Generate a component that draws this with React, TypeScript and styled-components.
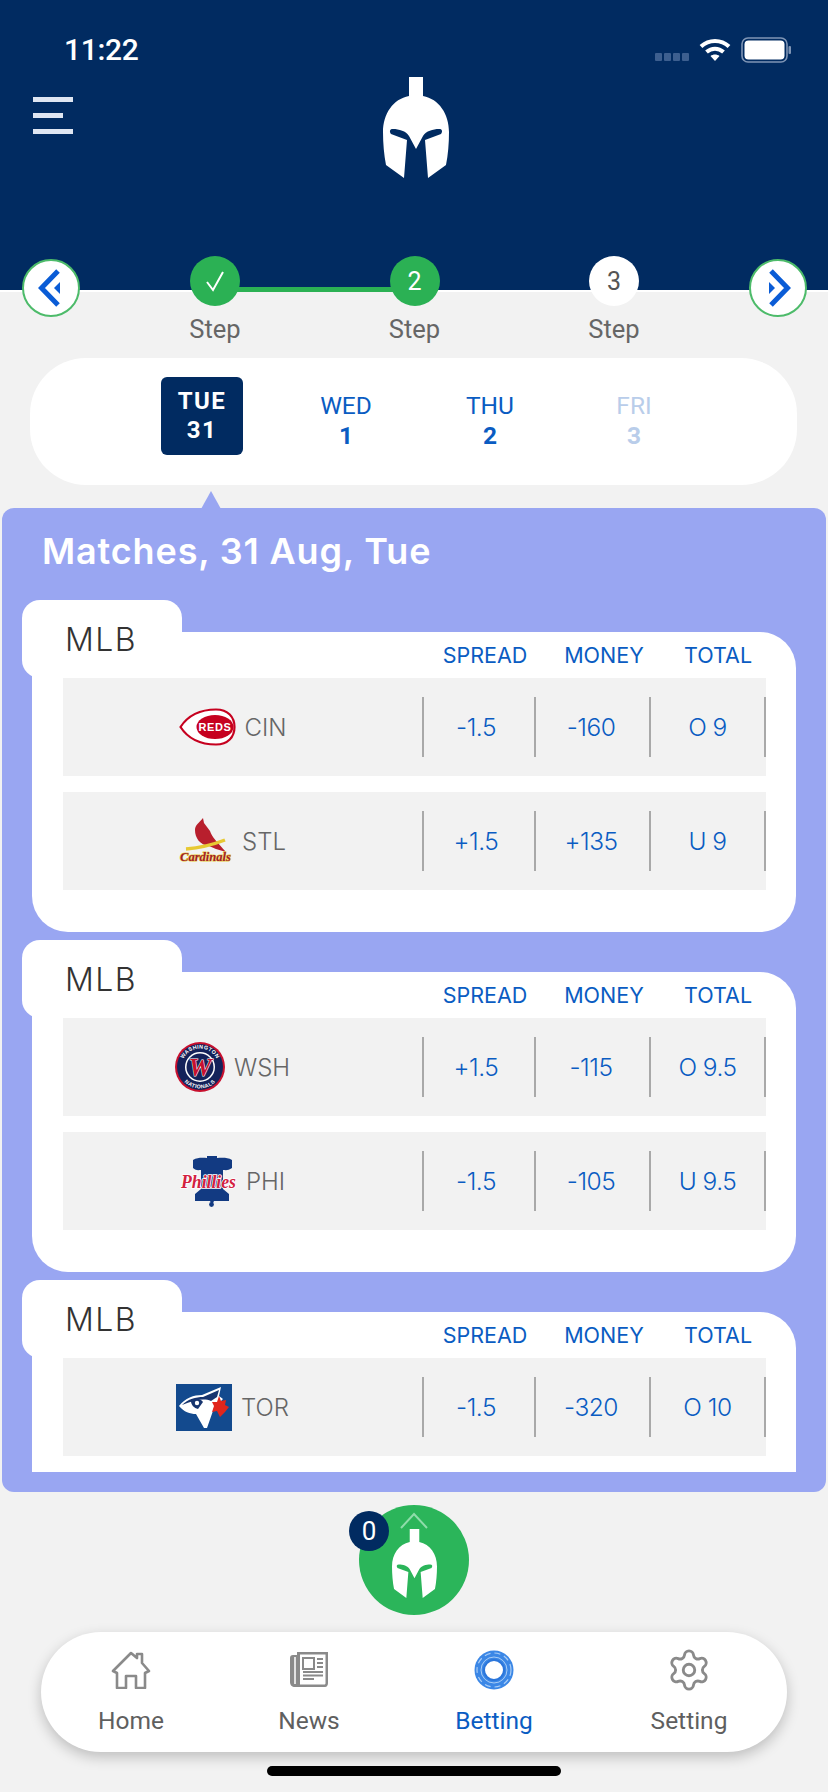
import React from "react";
import styled, { createGlobalStyle } from "styled-components";
import { Settings } from "lucide-react";

const GlobalStyle = createGlobalStyle`
  html, body {
    margin: 0;
    padding: 0;
    background: #f2f2f2;
  }
  * {
    box-sizing: border-box;
  }
`;

const Page = styled.div`
  width: 828px;
  height: 1792px;
  overflow: hidden;
  background: #f2f2f2;
  display: flex;
  flex-direction: column;
  font-family: Roboto, "Liberation Sans", sans-serif;
`;

const Header = styled.header`
  height: 290px;
  flex-shrink: 0;
  background: #012b61;
  box-shadow: 0 2px 0 #fff;
  color: #fff;
  display: flex;
  flex-direction: column;
`;

const StatusBar = styled.div`
  height: 76px;
  padding: 32px 37px 0 64px;
  display: flex;
  justify-content: space-between;
  align-items: flex-start;
`;

const Clock = styled.span`
  font-size: 30px;
  font-weight: 500;
  line-height: 36px;
  letter-spacing: -0.3px;
`;

const StatusIcons = styled.div`
  display: flex;
  align-items: center;
  gap: 10px;
  height: 36px;
`;

const SignalDots = styled.div`
  display: flex;
  gap: 2px;
  margin-top: 14px;
  span {
    width: 7px;
    height: 8px;
    border-radius: 1px;
    background: #3d5f8f;
  }
`;

const BrandRow = styled.div`
  position: relative;
  display: flex;
  justify-content: center;
  padding: 1px 0 0 3px;
`;

const Burger = styled.div`
  position: absolute;
  left: 33px;
  top: 21px;
  display: flex;
  flex-direction: column;
  gap: 11px;
`;

const BurgerLine = styled.span<{ $w: number }>`
  display: block;
  width: ${(p) => p.$w}px;
  height: 5px;
  background: #dfe6f2;
`;

const StepRow = styled.div`
  margin-top: -34px;
  padding: 0 21px 0 22px;
  height: 102px;
  flex-shrink: 0;
  display: grid;
  grid-template-columns: 58px 1fr 58px;
  position: relative;
`;

const ArrowButton = styled.div`
  width: 58px;
  height: 58px;
  margin-top: 3px;
  border-radius: 50%;
  background: #fff;
  border: 2px solid #4dbb6a;
  display: flex;
  align-items: center;
  justify-content: center;
`;

const Steps = styled.div`
  display: flex;
  justify-content: center;
`;

const Step = styled.div`
  width: 199.5px;
  display: flex;
  flex-direction: column;
  align-items: center;
  position: relative;
`;

const StepLine = styled.span`
  position: absolute;
  top: 31px;
  left: 50%;
  width: 199.5px;
  height: 5px;
  background: #2bb154;
`;

const StepDot = styled.div<{ $on: boolean }>`
  position: relative;
  width: 50px;
  height: 50px;
  border-radius: 50%;
  background: ${(p) => (p.$on ? "#2bb154" : "#fff")};
  color: ${(p) => (p.$on ? "#fff" : "#555")};
  font-size: 25px;
  display: flex;
  align-items: center;
  justify-content: center;
`;

const StepLabel = styled.span`
  margin-top: 8px;
  font-size: 25.5px;
  line-height: 30px;
  color: #666;
`;

const DatePill = styled.div`
  margin: 0 31px 0 30px;
  height: 127px;
  flex-shrink: 0;
  border-radius: 56px;
  background: #fff;
  padding: 19px 0 0 100px;
  display: grid;
  grid-template-columns: repeat(4, 144px);
  align-items: start;
`;

const DayCol = styled.div<{ $dim?: boolean }>`
  height: 78px;
  display: flex;
  flex-direction: column;
  align-items: center;
  justify-content: center;
  color: ${(p) => (p.$dim ? "#b9cdea" : "#0a5cc2")};
  font-size: 24.5px;
  line-height: 30px;
  padding-top: 10px;
  b {
    font-weight: 700;
  }
`;

const DayActive = styled.div`
  width: 82px;
  height: 78px;
  justify-self: center;
  border-radius: 6px;
  background: #012b61;
  color: #fff;
  font-size: 24px;
  font-weight: 700;
  line-height: 29px;
  letter-spacing: 1.4px;
  display: flex;
  flex-direction: column;
  align-items: center;
  justify-content: center;
`;

const Panel = styled.section`
  position: relative;
  margin: 23px 2px 0;
  height: 984px;
  flex-shrink: 0;
  background: #99a6f2;
  border-radius: 12px;
  display: flex;
  flex-direction: column;
  padding-bottom: 20px;

  &::before {
    content: "";
    position: absolute;
    left: 199px;
    top: -17px;
    border-left: 10px solid transparent;
    border-right: 10px solid transparent;
    border-bottom: 18px solid #99a6f2;
  }
`;

const PanelTitle = styled.h2`
  margin: 0;
  padding: 19px 0 0 40px;
  height: 92px;
  flex-shrink: 0;
  font-family: Inter, "Open Sans", sans-serif;
  font-size: 36px;
  font-weight: 600;
  letter-spacing: 0.85px;
  line-height: 48px;
  color: #fff;
`;

const MatchList = styled.div`
  flex: 1;
  min-height: 0;
  overflow: hidden;
  padding: 32px 0 0 30px;
  display: flex;
  flex-direction: column;
  gap: 40px;
`;

const LeagueCard = styled.article`
  position: relative;
  width: 764px;
  height: 300px;
  flex-shrink: 0;
  background: #fff;
  border-radius: 36px;
  padding: 0 30px 0 31px;
`;

const LeagueTab = styled.div`
  position: absolute;
  left: -10px;
  top: -32px;
  width: 160px;
  height: 78px;
  background: #fff;
  border-radius: 18px;
  padding: 20px 0 0 43px;
  font-family: Inter, "Open Sans", sans-serif;
  font-size: 32px;
  font-weight: 300;
  letter-spacing: 1.4px;
  line-height: 40px;
  color: #333;
`;

const MarketHead = styled.div`
  height: 46px;
  margin-right: -3px;
  display: grid;
  grid-template-columns: 366px 112px 126px 102px;
  align-items: center;
  font-family: Inter, "Open Sans", sans-serif;
  font-size: 21.5px;
  color: #0a5cc2;
  text-align: center;
  white-space: nowrap;
`;

const Rows = styled.div`
  display: flex;
  flex-direction: column;
  gap: 16px;
`;

const Row = styled.div`
  height: 98px;
  background: #f2f2f2;
  display: grid;
  grid-template-columns: 361px 112px 115px 115px;
  align-items: center;
`;

const TeamCell = styled.div`
  height: 60px;
  border-right: 2px solid #a9a9a9;
  padding-right: 20px;
  display: flex;
  align-items: center;
  justify-content: center;
  gap: 9px;
  font-family: Inter, "Open Sans", sans-serif;
  font-size: 24px;
  font-weight: 300;
  color: #666;
`;

const OddCell = styled.div<{ $nudge?: number }>`
  height: 60px;
  border-right: 2px solid #a9a9a9;
  padding-right: ${(p) => p.$nudge ?? 0}px;
  display: flex;
  align-items: center;
  justify-content: center;
  font-family: Inter, "Open Sans", sans-serif;
  font-size: 24.5px;
  font-weight: 300;
  letter-spacing: -0.5px;
  color: #0a5cc2;
`;

const Fab = styled.div`
  position: relative;
  width: 110px;
  height: 110px;
  margin: 13px auto 0;
  flex-shrink: 0;
  border-radius: 50%;
  background: #2bb55a;
  display: flex;
  flex-direction: column;
  align-items: center;
  padding-top: 7px;
`;

const FabBadge = styled.span`
  position: absolute;
  left: -10px;
  top: 6px;
  width: 40px;
  height: 40px;
  border-radius: 50%;
  background: #012b61;
  color: #fff;
  font-size: 26px;
  display: flex;
  align-items: center;
  justify-content: center;
`;

const TabBar = styled.nav`
  margin: 17px 41px 0;
  height: 120px;
  flex-shrink: 0;
  border-radius: 60px;
  background: #fff;
  box-shadow: 0 5px 14px rgba(0, 0, 0, 0.22);
  display: grid;
  grid-template-columns: 180px 176px 194px 196px;
`;

const TabItem = styled.div<{ $active?: boolean }>`
  display: flex;
  flex-direction: column;
  align-items: center;
  padding-top: 17px;
  font-size: 24.5px;
  color: ${(p) => (p.$active ? "#0a5cc2" : "#5f5f5f")};
`;

const TabIcon = styled.div`
  height: 41px;
  display: flex;
  align-items: center;
  justify-content: center;
`;

const TabLabel = styled.span`
  margin-top: 17px;
  line-height: 28px;
`;

const HomeBar = styled.div`
  width: 294px;
  height: 10px;
  margin: 14px auto 0;
  flex-shrink: 0;
  border-radius: 5px;
  background: #000;
`;

const HELMET =
  "M26 0H40V19C56 22 66 37 66 55C66 66 65 78 63 88L45 101L42 63L58 57C60 54 59 52 56 52C50 52 43 54 40 59L33 72L26 59C23 54 16 52 10 52C7 52 6 54 8 57L24 63L21 101L3 88C1 78 0 66 0 55C0 37 10 22 26 19Z";

const Helmet = ({ w, h }: { w: number; h: number }) => (
  <svg width={w} height={h} viewBox="0 0 66 101">
    <path d={HELMET} fill="#fff" />
  </svg>
);

const Wifi = () => (
  <svg width="32" height="24" viewBox="0 0 32 24" fill="none" stroke="#fff" strokeWidth="4">
    <path d="M2 8.5C10 1 22 1 30 8.5" />
    <path d="M7.5 14C12.5 9.5 19.5 9.5 24.5 14" />
    <path d="M16 23l-4.5-5c2.5-2 6.5-2 9 0z" fill="#fff" stroke="none" />
  </svg>
);

const Battery = () => (
  <svg width="50" height="26" viewBox="0 0 50 26">
    <rect x="1" y="1" width="45" height="24" rx="6" fill="none" stroke="#7f95b5" strokeWidth="1.6" />
    <rect x="3.5" y="3.5" width="40" height="19" rx="4" fill="#fff" />
    <rect x="47.5" y="9" width="2.5" height="8" rx="1" fill="#7f95b5" />
  </svg>
);

const Chevrons = ({ flip }: { flip?: boolean }) => (
  <svg width="26" height="40" viewBox="0 0 26 40" style={flip ? { transform: "scaleX(-1)" } : undefined}>
    <path d="M20 3L3.500 20L20 37" fill="none" stroke="#0a5cd6" strokeWidth="5" />
    <path d="M16 20L22 14V26Z" fill="#0a5cd6" />
  </svg>
);

const RedsLogo = () => (
  <svg width="57" height="38" viewBox="0 0 57 38">
    <path d="M1.500 19C8 9 19 1.500 37 1.500C49 1.500 55.500 9 55.500 19C55.500 29 49 36.500 37 36.500C19 36.500 8 29 1.500 19Z" fill="#fff" stroke="#c6011f" strokeWidth="2.200" />
    <ellipse cx="36" cy="19" rx="18.500" ry="12" fill="#c6011f" />
    <text x="36" y="23" textAnchor="middle" fontFamily="Liberation Sans" fontWeight="700" fontSize="11" letterSpacing="0.6" fill="#fff">
      REDS
    </text>
  </svg>
);

const CardinalsLogo = () => (
  <svg width="54" height="47" viewBox="0 0 54 47">
    <path d="M24 0L25 5L31 13C33 19 38 24 47 34L37 31L30 28C21 27 16 20 16 12C16 7 20 5 24 0Z" fill="#b81f2d" />
    <path d="M7 31C20 30 33 27 46 22" stroke="#e7c933" strokeWidth="3.400" fill="none" />
    <text x="1" y="43" fontFamily="Liberation Serif" fontStyle="italic" fontWeight="700" fontSize="13.500" textLength="51" lengthAdjust="spacingAndGlyphs" fill="#a31c30" stroke="#e7c933" strokeWidth="1.200" paintOrder="stroke">
      Cardinals
    </text>
  </svg>
);

const NationalsLogo = () => (
  <svg width="50" height="50" viewBox="0 0 50 50">
    <defs>
      <path id="natTop" d="M6.500 25A18.500 18.500 0 0 1 43.500 25" />
      <path id="natBottom" d="M3.500 25A21.500 21.500 0 0 0 46.500 25" />
    </defs>
    <circle cx="25" cy="25" r="25" fill="#c8102e" />
    <circle cx="25" cy="25" r="23" fill="#14225a" />
    <circle cx="25" cy="25" r="15" fill="#fff" />
    <circle cx="25" cy="25" r="13.500" fill="#14225a" />
    <text fontFamily="Liberation Sans" fontWeight="700" fontSize="5.400" fill="#fff" letterSpacing="0.4">
      <textPath href="#natTop" startOffset="50%" textAnchor="middle">WASHINGTON</textPath>
    </text>
    <text fontFamily="Liberation Sans" fontWeight="700" fontSize="5.400" fill="#fff" letterSpacing="0.4">
      <textPath href="#natBottom" startOffset="50%" textAnchor="middle">NATIONALS</textPath>
    </text>
    <text x="25" y="34" textAnchor="middle" fontFamily="Liberation Serif" fontStyle="italic" fontWeight="700" fontSize="26" fill="#c8102e" stroke="#fff" strokeWidth="1" paintOrder="stroke">
      W
    </text>
  </svg>
);

const PhilliesLogo = () => (
  <svg width="57" height="52" viewBox="0 0 57 52">
    <path d="M13 5C18 2 24 3 27 3V1H37V3C41 3 47 2 52 5V13C48 16 45 15 43 15V34L49 39V46H34L32 50L30 46H15V39L21 34V15C19 15 16 16 13 13Z" fill="#123a82" />
    <circle cx="31.500" cy="49.500" r="2.400" fill="#123a82" />
    <text x="1" y="33" fontFamily="Liberation Serif" fontStyle="italic" fontWeight="700" fontSize="18" textLength="55" lengthAdjust="spacingAndGlyphs" fill="#d3213f" stroke="#fff" strokeWidth="1.600" paintOrder="stroke">
      Phillies
    </text>
  </svg>
);

const JaysLogo = () => (
  <svg width="56" height="47" viewBox="0 0 56 47">
    <rect width="56" height="47" fill="#134a8e" />
    <path d="M3 22C9 14 18 11 26 11L45 3L43 12L47 15L38 24L31 44L28 44L20 30C14 30 8 28 3 22Z" fill="#fff" />
    <path d="M6 21C12 15 20 13 27 13L43 6L41 13L35 17C28 14 18 16 6 21Z" fill="#17356f" />
    <path d="M15 17C18 14 24 14 27 18L22 25C18 24 15 21 15 17Z" fill="#17356f" />
    <circle cx="21" cy="19" r="2.200" fill="#fff" />
    <path d="M43 12L45 17L50 16L49 21L53 23L49 28L44 33L41 27L36 28L38 22L36 18L41 18Z" fill="#e1261c" />
  </svg>
);

const HomeIcon = () => (
  <svg width="40" height="38" viewBox="0 0 40 38" fill="none" stroke="#8a8a8a" strokeWidth="2.600" strokeLinejoin="round">
    <path d="M2 20L20 2L26 7V3H31V12L38 20L34 22V37H25V25H15V37H6V22Z" />
  </svg>
);

const NewsIcon = () => (
  <svg width="40" height="37" viewBox="0 0 40 37">
    <path d="M8 4H4C2 4 1 5 1 7V31C1 34 3 36 6 36H36C38 36 39 34 39 32V1H8Z" fill="#8a8a8a" />
    <path d="M11 3.500H36.500V32C36.500 33 36 33.500 35 33.500H11Z" fill="#fff" />
    <path d="M6 6V33" stroke="#fff" strokeWidth="1.500" />
    <rect x="14" y="7" width="11" height="11" fill="none" stroke="#8a8a8a" strokeWidth="2" />
    <path d="M28 8H34M28 12H34M28 16H34M14 21H34M14 24.500H34M14 28H25" stroke="#8a8a8a" strokeWidth="2" />
  </svg>
);

const ChipIcon = () => (
  <svg width="40" height="40" viewBox="0 0 40 40" fill="none">
    <circle cx="20" cy="20" r="19.500" fill="#3b87e6" />
    <circle cx="20" cy="20" r="17" stroke="#a9cdf6" strokeWidth="1.200" strokeDasharray="6 4" />
    <circle cx="20" cy="20" r="13" stroke="#a9cdf6" strokeWidth="1" />
    <circle cx="20" cy="20" r="10" fill="#fff" stroke="#2b76db" strokeWidth="2" />
  </svg>
);

const UpCaret = () => (
  <svg width="30" height="17" viewBox="0 0 30 17" fill="none" stroke="#8fdcaa" strokeWidth="2">
    <path d="M2 16L15 2L28 16" />
  </svg>
);

type Line = { logo: React.ReactNode; team: string; spread: string; money: string; total: string };

const matches: Line[][] = [
  [
    { logo: <RedsLogo />, team: "CIN", spread: "-1.5", money: "-160", total: "O 9" },
    { logo: <CardinalsLogo />, team: "STL", spread: "+1.5", money: "+135", total: "U 9" },
  ],
  [
    { logo: <NationalsLogo />, team: "WSH", spread: "+1.5", money: "-115", total: "O 9.5" },
    { logo: <PhilliesLogo />, team: "PHI", spread: "-1.5", money: "-105", total: "U 9.5" },
  ],
  [{ logo: <JaysLogo />, team: "TOR", spread: "-1.5", money: "-320", total: "O 10" }],
];

const App = () => {
  return (
    <Page>
      <GlobalStyle />
      <Header>
        <StatusBar>
          <Clock>11:22</Clock>
          <StatusIcons>
            <SignalDots>
              <span />
              <span />
              <span />
              <span />
            </SignalDots>
            <Wifi />
            <Battery />
          </StatusIcons>
        </StatusBar>
        <BrandRow>
          <Burger>
            <BurgerLine $w={40} />
            <BurgerLine $w={30} />
            <BurgerLine $w={40} />
          </Burger>
          <Helmet w={66} h={101} />
        </BrandRow>
      </Header>

      <StepRow>
        <ArrowButton>
          <Chevrons />
        </ArrowButton>
        <Steps>
          <Step>
            <StepLine />
            <StepDot $on>
              <svg width="24" height="24" viewBox="0 0 24 24" fill="none" stroke="#fff" strokeWidth="2">
                <path d="M4 13L10 21L20 3" />
              </svg>
            </StepDot>
            <StepLabel>Step</StepLabel>
          </Step>
          <Step>
            <StepDot $on>2</StepDot>
            <StepLabel>Step</StepLabel>
          </Step>
          <Step>
            <StepDot $on={false}>3</StepDot>
            <StepLabel>Step</StepLabel>
          </Step>
        </Steps>
        <ArrowButton>
          <Chevrons flip />
        </ArrowButton>
      </StepRow>

      <DatePill>
        <DayActive>
          <span>TUE</span>
          <span>31</span>
        </DayActive>
        <DayCol>
          <span>WED</span>
          <b>1</b>
        </DayCol>
        <DayCol>
          <span>THU</span>
          <b>2</b>
        </DayCol>
        <DayCol $dim>
          <span>FRI</span>
          <b>3</b>
        </DayCol>
      </DatePill>

      <Panel>
        <PanelTitle>Matches, 31 Aug, Tue</PanelTitle>
        <MatchList>
          {matches.map((lines, i) => (
            <LeagueCard key={i}>
              <LeagueTab>MLB</LeagueTab>
              <MarketHead>
                <span />
                <span>SPREAD</span>
                <span>MONEY</span>
                <span>TOTAL</span>
              </MarketHead>
              <Rows>
                {lines.map((line) => (
                  <Row key={line.team}>
                    <TeamCell>
                      {line.logo}
                      <span>{line.team}</span>
                    </TeamCell>
                    <OddCell $nudge={6}>{line.spread}</OddCell>
                    <OddCell $nudge={3}>{line.money}</OddCell>
                    <OddCell>{line.total}</OddCell>
                  </Row>
                ))}
              </Rows>
            </LeagueCard>
          ))}
        </MatchList>
      </Panel>

      <Fab>
        <FabBadge>0</FabBadge>
        <UpCaret />
        <Helmet w={45} h={69} />
      </Fab>

      <TabBar>
        <TabItem>
          <TabIcon>
            <HomeIcon />
          </TabIcon>
          <TabLabel>Home</TabLabel>
        </TabItem>
        <TabItem>
          <TabIcon>
            <NewsIcon />
          </TabIcon>
          <TabLabel>News</TabLabel>
        </TabItem>
        <TabItem $active>
          <TabIcon>
            <ChipIcon />
          </TabIcon>
          <TabLabel>Betting</TabLabel>
        </TabItem>
        <TabItem>
          <TabIcon>
            <Settings size={46} strokeWidth={1.5} color="#8a8a8a" />
          </TabIcon>
          <TabLabel>Setting</TabLabel>
        </TabItem>
      </TabBar>

      <HomeBar />
    </Page>
  );
};

export default App;
